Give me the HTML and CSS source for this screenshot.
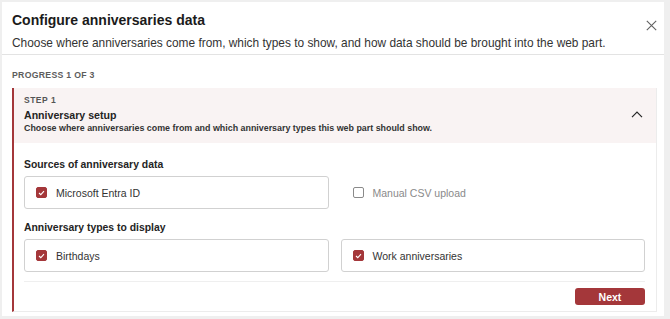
FILE: index.html
```html
<!DOCTYPE html>
<html lang="en">
<head>
<meta charset="utf-8">
<title>Configure anniversaries data</title>
<link rel="stylesheet" href="styles.css">
</head>
<body>
<div class="dialog">
  <header class="dlg-header">
    <div class="titles">
      <h1 class="title">Configure anniversaries data</h1>
      <p class="subtitle">Choose where anniversaries come from, which types to show, and how data should be brought into the web part.</p>
    </div>
    <button class="close" aria-label="Close">
      <svg width="11" height="11" viewBox="0 0 11 11"><path d="M0.8 0.8L10.2 10.2M10.2 0.8L0.8 10.2" stroke="#616161" stroke-width="1.1" fill="none"/></svg>
    </button>
  </header>
  <main class="dlg-body">
    <div class="progress">PROGRESS 1 OF 3</div>
    <section class="step">
      <div class="step-head">
        <div class="step-texts">
          <div class="step-num">STEP 1</div>
          <div class="step-title">Anniversary setup</div>
          <div class="step-desc">Choose where anniversaries come from and which anniversary types this web part should show.</div>
        </div>
        <svg class="chev" width="12" height="7" viewBox="0 0 12 7"><path d="M1 6.2L6 1.2L11 6.2" stroke="#242424" stroke-width="1.2" fill="none"/></svg>
      </div>
      <div class="step-body">
        <div class="group-label">Sources of anniversary data</div>
        <div class="opts">
          <label class="opt"><span class="cb on"><svg width="7" height="6" viewBox="0 0 7 6"><path d="M1 3L2.8 4.7L6 1.2" stroke="#fff" stroke-width="1.1" fill="none"/></svg></span>Microsoft Entra ID</label>
          <label class="opt disabled"><span class="cb"></span>Manual CSV upload</label>
        </div>
        <div class="group-label">Anniversary types to display</div>
        <div class="opts opts-last">
          <label class="opt"><span class="cb on"><svg width="7" height="6" viewBox="0 0 7 6"><path d="M1 3L2.8 4.7L6 1.2" stroke="#fff" stroke-width="1.1" fill="none"/></svg></span>Birthdays</label>
          <label class="opt"><span class="cb on"><svg width="7" height="6" viewBox="0 0 7 6"><path d="M1 3L2.8 4.7L6 1.2" stroke="#fff" stroke-width="1.1" fill="none"/></svg></span>Work anniversaries</label>
        </div>
        <div class="actions">
          <button class="next">Next</button>
        </div>
      </div>
    </section>
  </main>
</div>
</body>
</html>
```
FILE: styles.css
```css
* { box-sizing: border-box; }
html, body { margin: 0; height: 100%; }
body {
  background: #efefef;
  padding: 2px 6px 3px 2px;
  font-family: "Liberation Sans", Arial, sans-serif;
  color: #242424;
}
.dialog {
  background: #fff;
  height: 100%;
  display: flex;
  flex-direction: column;
}
.dlg-header {
  display: flex;
  justify-content: space-between;
  align-items: flex-start;
  padding: 8px 7px 3px 10px;
  border-bottom: 1px solid #e3e3e3;
}
.title {
  margin: 0;
  font-size: 14px;
  line-height: 20px;
  font-weight: 700;
  color: #1b1b1b;
}
.subtitle {
  margin: 5px 0 0;
  font-size: 11.9px;
  line-height: 16px;
  color: #333;
}
.close {
  border: 0;
  background: none;
  padding: 0;
  margin: 10px 0 0 0;
  display: flex;
}
.dlg-body {
  padding: 14px 7px 4px 10px;
  flex: 1;
  display: flex;
  flex-direction: column;
}
.progress {
  font-size: 8.7px;
  font-weight: 700;
  letter-spacing: 0.3px;
  color: #5c5c5c;
  line-height: 12px;
}
.step {
  margin-top: 7px;
  flex: 1;
  border-left: 2px solid #a4373a;
  border-right: 1px solid #ececec;
  border-bottom: 1px solid #ececec;
  display: flex;
  flex-direction: column;
}
.step-head {
  background: #f9f3f3;
  display: flex;
  align-items: center;
  justify-content: space-between;
  padding: 7px 13px 9px 10px;
}
.step-num {
  font-size: 8.5px;
  font-weight: 700;
  letter-spacing: 0.5px;
  color: #555;
  line-height: 11px;
}
.step-title {
  font-size: 10.6px;
  font-weight: 700;
  line-height: 14px;
  margin-top: 2px;
}
.step-desc {
  font-size: 8.9px;
  font-weight: 700;
  line-height: 12px;
  color: #333;
}
.step-body {
  flex: 1;
  padding: 15px 11px 6px 10px;
  display: flex;
  flex-direction: column;
}
.group-label {
  font-size: 10.4px;
  font-weight: 700;
  line-height: 14px;
  color: #242424;
}
.opts {
  display: grid;
  grid-template-columns: 1fr 1fr;
  gap: 12px;
  margin: 4px 0 12px;
}
.opts-last { margin-bottom: 9px; }
.opt {
  display: flex;
  align-items: center;
  gap: 9px;
  height: 33px;
  padding: 0 11px;
  border: 1px solid #d1d1d1;
  border-radius: 3px;
  font-size: 10.5px;
  color: #333;
}
.opt.disabled { border-color: transparent; color: #8a8a8a; }
.cb {
  width: 11px;
  height: 11px;
  border: 1px solid #8a8a8a;
  border-radius: 2px;
  display: flex;
  align-items: center;
  justify-content: center;
  flex: none;
}
.cb.on { background: #a4373a; border-color: #a4373a; }
.actions {
  margin-top: auto;
  border-top: 1px solid #efefef;
  padding-top: 6px;
  display: flex;
  justify-content: flex-end;
}
.next {
  background: #a4373a;
  color: #fff;
  border: 0;
  border-radius: 3px;
  width: 70px;
  height: 17px;
  font-family: inherit;
  font-size: 10.5px;
  font-weight: 700;
  padding: 0;
}
```
